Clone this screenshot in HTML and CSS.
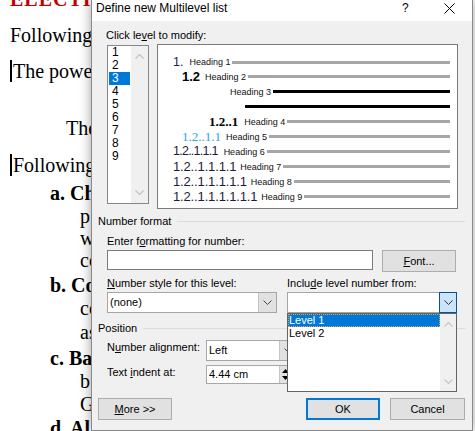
FILE: index.html
```html
<!DOCTYPE html>
<html>
<head>
<meta charset="utf-8">
<link rel="stylesheet" href="styles.css">
</head>
<body>
<div class="doc">
  <div class="dl red g0">ELECTI</div>
  <div class="dl g14">Following</div>
  <div class="dl g14"><span class="caret"></span>The power</div>
  <div class="dl g35 in-the">The</div>
  <div class="dl g15"><span class="caret"></span>Following</div>
  <div class="dl g6 in-a b">a. Ch</div>
  <div class="dl g1 in-s">p</div>
  <div class="dl g0 in-s">w</div>
  <div class="dl g0 in-s">co</div>
  <div class="dl g3 in-a b">b. Co</div>
  <div class="dl g1 in-s">co</div>
  <div class="dl g2 in-s">as</div>
  <div class="dl g4 in-a b">c. Ba</div>
  <div class="dl g1 in-s">b</div>
  <div class="dl g1 in-s">G</div>
  <div class="dl g2 in-a b">d. Al</div>
</div>

<div class="dialog">
  <div class="titlebar">
    <span class="title">Define new Multilevel list</span>
    <span class="help">?</span>
    <svg class="close" width="11" height="11" viewBox="0 0 11 11"><path d="M0.5 0.5 L10.5 10.5 M10.5 0.5 L0.5 10.5" stroke="#000" stroke-width="1" fill="none"/></svg>
  </div>
  <div class="body">
    <div class="lbl click-lbl">Click le<u>v</u>el to modify:</div>
    <div class="top-row">
      <div class="levels">
        <div class="level-items">
          <div class="lvl">1</div>
          <div class="lvl">2</div>
          <div class="lvl sel">3</div>
          <div class="lvl">4</div>
          <div class="lvl">5</div>
          <div class="lvl">6</div>
          <div class="lvl">7</div>
          <div class="lvl">8</div>
          <div class="lvl">9</div>
        </div>
        <div class="vscroll">
          <svg class="chev" width="9" height="5" viewBox="0 0 9 5"><polyline points="0.5,4.5 4.5,0.5 8.5,4.5" fill="none" stroke="#c2c2c2" stroke-width="1.2"/></svg>
          <svg class="chev" width="9" height="5" viewBox="0 0 9 5"><polyline points="0.5,0.5 4.5,4.5 8.5,0.5" fill="none" stroke="#c2c2c2" stroke-width="1.2"/></svg>
        </div>
      </div>
      <div class="preview">
        <div class="prow r1"><span class="num n1">1.</span><span class="hd">Heading 1</span><span class="bar"></span></div>
        <div class="prow r2"><span class="num n2">1.2</span><span class="hd">Heading 2</span><span class="bar"></span></div>
        <div class="prow r3"><span class="hd">Heading 3</span><span class="bar dark"></span></div>
        <div class="prow r4"><span class="bar dark nogap"></span></div>
        <div class="prow r5"><span class="num n5">1.2..1</span><span class="hd">Heading 4</span><span class="bar"></span></div>
        <div class="prow r6"><span class="num n6">1.2..1.1</span><span class="hd">Heading 5</span><span class="bar"></span></div>
        <div class="prow r7"><span class="num n7">1.2..1.1.1</span><span class="hd">Heading 6</span><span class="bar"></span></div>
        <div class="prow r7"><span class="num n8">1.2..1.1.1.1</span><span class="hd">Heading 7</span><span class="bar"></span></div>
        <div class="prow r7"><span class="num n8">1.2..1.1.1.1.1</span><span class="hd">Heading 8</span><span class="bar"></span></div>
        <div class="prow r7"><span class="num n8">1.2..1.1.1.1.1.1</span><span class="hd">Heading 9</span><span class="bar"></span></div>
      </div>
    </div>

    <div class="group-h"><span>Number format</span><span class="rule"></span></div>
    <div class="lbl fmt-lbl">Enter f<u>o</u>rmatting for number:</div>
    <div class="fmt-row">
      <div class="textbox fmt-input"></div>
      <div class="btn font-btn"><span><u>F</u>ont...</span></div>
    </div>
    <div class="two-col labels">
      <div class="lbl"><u>N</u>umber style for this level:</div>
      <div class="lbl">Inclu<u>d</u>e level number from:</div>
    </div>
    <div class="two-col selects">
      <div class="combo style-combo">
        <span class="val">(none)</span>
        <span class="arrow-btn"><svg width="9" height="5" viewBox="0 0 9 5"><polyline points="0.5,0.5 4.5,4.5 8.5,0.5" fill="none" stroke="#444" stroke-width="1"/></svg></span>
      </div>
      <div class="include-wrap">
        <div class="combo include-combo">
          <span class="val"></span>
          <span class="arrow-btn active"><svg width="9" height="5" viewBox="0 0 9 5"><polyline points="0.5,0.5 4.5,4.5 8.5,0.5" fill="none" stroke="#333" stroke-width="1"/></svg></span>
        </div>
        <div class="dropdown">
          <div class="dd-items">
            <div class="dd-item sel">Level 1</div>
            <div class="dd-item">Level 2</div>
          </div>
          <div class="dd-scroll">
            <svg width="9" height="5" viewBox="0 0 9 5"><polyline points="0.5,4.5 4.5,0.5 8.5,4.5" fill="none" stroke="#c8c8c8" stroke-width="1.2"/></svg>
            <svg width="9" height="5" viewBox="0 0 9 5"><polyline points="0.5,0.5 4.5,4.5 8.5,0.5" fill="none" stroke="#c8c8c8" stroke-width="1.2"/></svg>
          </div>
        </div>
      </div>
    </div>

    <div class="group-h pos-h"><span>Position</span><span class="rule"></span></div>
    <div class="field-row align-row">
      <div class="lbl flabel">N<u>u</u>mber alignment:</div>
      <div class="combo align-combo">
        <span class="val">Left</span>
        <span class="arrow-btn"><svg width="9" height="5" viewBox="0 0 9 5"><polyline points="0.5,0.5 4.5,4.5 8.5,0.5" fill="none" stroke="#444" stroke-width="1"/></svg></span>
      </div>
    </div>
    <div class="field-row indent-row">
      <div class="lbl flabel">Text <u>i</u>ndent at:</div>
      <div class="textbox indent-input">
        <span class="val">4.44 cm</span>
        <span class="spin">
          <svg width="7" height="4" viewBox="0 0 7 4"><polygon points="0,4 3.5,0 7,4" fill="#000"/></svg>
          <svg width="7" height="4" viewBox="0 0 7 4"><polygon points="0,0 3.5,4 7,0" fill="#000"/></svg>
        </span>
      </div>
    </div>

    <div class="btn-row">
      <div class="btn more-btn"><span><u>M</u>ore &gt;&gt;</span></div>
      <div class="spacer"></div>
      <div class="btn ok-btn"><span>OK</span></div>
      <div class="btn cancel-btn"><span>Cancel</span></div>
    </div>
  </div>
</div>
</body>
</html>
```

FILE: styles.css
```css
* { box-sizing: border-box; }

html, body {
  margin: 0;
  padding: 0;
}

body {
  width: 475px;
  height: 431px;
  overflow: hidden;
  background: #ffffff;
  position: relative;
}

/* ---------- background document ---------- */
.doc {
  font-family: "Liberation Serif", "Times New Roman", serif;
  font-size: 20px;
  color: #000;
  padding-left: 10px;
  margin-top: -12px;
}
.dl {
  height: 22px;
  line-height: 22px;
  white-space: nowrap;
  display: flex;
  align-items: center;
}
.dl.red { color: #c00000; font-weight: bold; letter-spacing: 1px; }
.dl.b { font-weight: bold; }
.caret {
  display: inline-block;
  width: 2px;
  height: 22px;
  background: #000;
  margin-right: 1px;
}
.in-the { padding-left: 56px; }
.in-a { padding-left: 40px; }
.in-s { padding-left: 70px; }
.g0 { margin-top: 0; }
.g1 { margin-top: 1px; }
.g2 { margin-top: 2px; }
.g3 { margin-top: 3px; }
.g4 { margin-top: 4px; }
.g6 { margin-top: 6px; }
.g14 { margin-top: 14px; }
.g15 { margin-top: 15px; }
.g35 { margin-top: 35px; }

/* ---------- dialog ---------- */
.dialog {
  position: absolute;
  left: 91px;
  top: 0;
  width: 382px;
  height: 431px;
  background: #f0f0f0;
  border: 1px solid #8a8a8a;
  border-top: none;
  box-shadow: 0 0 11px rgba(0, 0, 0, 0.38);
  font-family: "Liberation Sans", Arial, sans-serif;
  font-size: 11px;
  color: #000;
}
.dialog u {
  text-decoration-thickness: 1px;
  text-underline-offset: 1px;
}

.titlebar {
  height: 21px;
  background: #ffffff;
  display: flex;
  align-items: flex-start;
  position: relative;
  font-size: 12px;
}
.title {
  padding-left: 4px;
  line-height: 16px;
}
.help {
  margin-left: auto;
  line-height: 16px;
  width: 10px;
}
.close {
  margin-left: 32px;
  margin-top: 3px;
  margin-right: 17px;
}

.body {
  padding-left: 15px;
}

.lbl {
  line-height: 14px;
  white-space: nowrap;
}

.click-lbl {
  margin-top: 7px;
  margin-left: -1px;
}

.top-row {
  display: flex;
  align-items: flex-start;
  margin-top: 2px;
}

.levels {
  width: 42px;
  height: 159px;
  margin-top: 1px;
  border: 1px solid #828790;
  background: #fff;
  display: flex;
  font-size: 12px;
}
.level-items {
  width: 22px;
  padding: 0 0 0 1px;
}
.lvl {
  height: 13px;
  line-height: 13px;
  padding-left: 3px;
}
.lvl.sel {
  background: #0078d7;
  color: #fff;
}
.vscroll {
  flex: 1;
  background: #f0f0f0;
  display: flex;
  flex-direction: column;
  align-items: center;
  justify-content: space-between;
  padding: 8px 0 8px 0;
  margin-left: 1px;
}
.chev { display: block; }

.preview {
  width: 301px;
  height: 165px;
  margin-left: 8px;
  border: 1px solid #7a7a7a;
  background: #fff;
  padding: 10px 7px 0 0;
}
.prow {
  height: 15px;
  display: flex;
  align-items: center;
  white-space: nowrap;
}
.prow.r1 { height: 14px; padding-left: 15px; }
.prow.r2 { padding-left: 24px; }
.prow.r3 { padding-left: 72px; }
.prow.r4 { padding-left: 87px; }
.prow.r5 { padding-left: 51px; }
.prow.r6 { padding-left: 24px; }
.prow.r7 { padding-left: 15px; }

.num {
  font-family: "Liberation Sans", Arial, sans-serif;
  color: #1c1c3a;
  margin-right: 4px;
  line-height: 15px;
}
.n1 { font-size: 12.5px; margin-right: 6px; color: #202048; }
.n2 { font-size: 13px; font-weight: bold; margin-right: 5px; color: #000; }
.n5 { font-family: "Liberation Serif", "Times New Roman", serif; font-size: 13px; font-weight: bold; margin-right: 6px; color: #000; }
.n6 { font-family: "Liberation Serif", "Times New Roman", serif; font-size: 13px; color: #2aa7e0; margin-right: 5px; }
.n7 { font-size: 12.5px; letter-spacing: -0.75px; margin-right: 6px; }
.n8 { font-size: 13px; letter-spacing: -0.15px; margin-right: 4px; }

.hd {
  font-size: 9px;
  color: #111;
  line-height: 12px;
}
.bar {
  flex: 1;
  height: 3px;
  background: #a6a6a6;
  margin-left: 2px;
}
.bar.dark { background: #000; }
.bar.nogap { margin-left: 0; }

.group-h {
  display: flex;
  align-items: center;
  margin-left: -9px;
  margin-right: 7px;
  margin-top: 5px;
  line-height: 14px;
  color: #000;
}
.group-h .rule {
  flex: 1;
  height: 1px;
  background: #dcdcdc;
  margin-left: 6px;
}

.fmt-lbl { margin-top: 6px; }

.fmt-row {
  display: flex;
  align-items: flex-start;
  margin-top: 2px;
}
.textbox {
  background: #fff;
  border: 1px solid #7a7a7a;
}
.fmt-input {
  width: 266px;
  height: 20px;
}

.btn {
  background: #e1e1e1;
  border: 1px solid #adadad;
  display: flex;
  align-items: center;
  justify-content: center;
  height: 22px;
}
.font-btn {
  width: 74px;
  margin-left: 9px;
}

.two-col {
  display: grid;
  grid-template-columns: 170px 170px;
  column-gap: 10px;
}
.labels { margin-top: 4px; }
.selects { margin-top: 2px; }

.combo {
  height: 21px;
  border: 1px solid #a6a6a6;
  background: #fff;
  display: flex;
  align-items: stretch;
}
.combo .val {
  flex: 1;
  padding-left: 2px;
  line-height: 19px;
}
.arrow-btn {
  width: 18px;
  background: #e1e1e1;
  border-left: 1px solid #c4c4c4;
  display: flex;
  align-items: center;
  justify-content: center;
}
.arrow-btn.active {
  background: #cce4f7;
  border: 1px solid #005499;
  margin: -1px -1px -1px 0;
  width: 18px;
}
.include-combo {
  border-color: #a6a6a6;
}

.include-wrap { position: relative; }
.dropdown {
  position: absolute;
  top: 21px;
  left: 0;
  width: 170px;
  height: 79px;
  background: #fff;
  border: 1px solid #646464;
  display: flex;
  z-index: 5;
}
.dd-items {
  width: 152px;
}
.dd-item {
  height: 13px;
  line-height: 12px;
  padding-left: 1px;
}
.dd-item.sel {
  background: #0078d7;
  color: #fff;
  outline: 1px dotted #f0a040;
  outline-offset: -1px;
}
.dd-scroll {
  flex: 1;
  background: #f0f0f0;
  display: flex;
  flex-direction: column;
  align-items: center;
  justify-content: space-between;
  padding: 8px 0 7px 0;
}
.dd-scroll svg { display: block; }

.pos-h { margin-top: 8px; }

.field-row {
  display: flex;
  align-items: flex-start;
}
.flabel {
  width: 99px;
}
.align-row { margin-top: 5px; }
.align-combo {
  width: 92px;
}
.indent-row { margin-top: 4px; }
.indent-input {
  width: 92px;
  height: 19px;
  display: flex;
  align-items: stretch;
  border-color: #a6a6a6;
}
.indent-input .val {
  width: 72px;
  padding-left: 2px;
  line-height: 17px;
}
.spin {
  width: 12px;
  background: #e1e1e1;
  border-left: 1px solid #c4c4c4;
  display: flex;
  flex-direction: column;
  align-items: center;
  justify-content: space-around;
  padding: 1px 0;
}
.spin svg { display: block; }

.btn-row {
  display: flex;
  margin-top: 14px;
  margin-left: -9px;
  margin-right: 7px;
}
.more-btn { width: 74px; }
.spacer { flex: 1; }
.ok-btn {
  width: 74px;
  border: 2px solid #0078d7;
}
.cancel-btn {
  width: 75px;
  margin-left: 10px;
}
```
